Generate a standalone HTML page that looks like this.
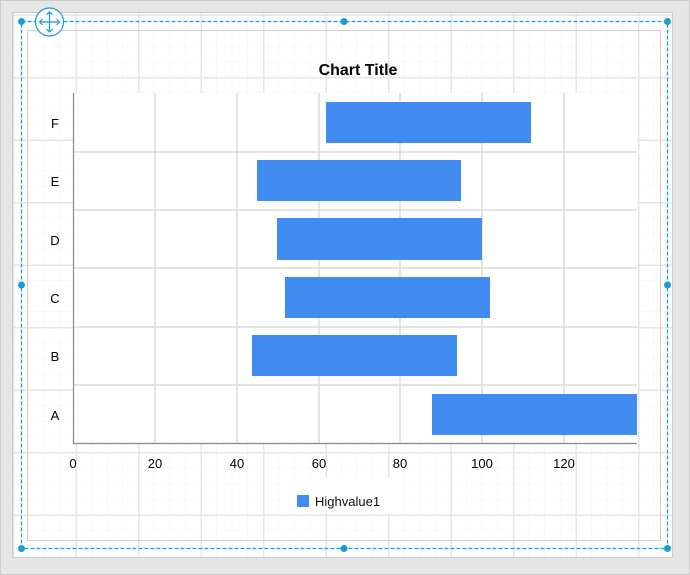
<!DOCTYPE html>
<html><head><meta charset="utf-8"><style>
html,body{margin:0;padding:0;background:#e6e6e6;}
body{width:690px;height:575px;overflow:hidden;position:relative;font-family:"Liberation Sans",sans-serif;}
</style></head><body>
<svg width="690" height="575" xmlns="http://www.w3.org/2000/svg" style="position:absolute;left:0;top:0">
<defs>
<pattern id="minor" x="13" y="14.5" width="15.625" height="15.625" patternUnits="userSpaceOnUse">
<path d="M0 0H15.625M0 0V15.625" stroke="#f1f1f1" stroke-width="1" fill="none"/>
</pattern>
<pattern id="major" x="13" y="14.5" width="62.5" height="62.5" patternUnits="userSpaceOnUse">
<path d="M0 0.5H62.5M0.5 0V62.5" stroke="#e6e6e6" stroke-width="2" fill="none"/>
</pattern>
</defs>
<rect x="0.5" y="0.5" width="689" height="574" fill="#e6e6e6" stroke="#cccccc"/>
<rect x="12.5" y="12.5" width="660" height="545" fill="#fff" stroke="#cccccc"/>
<rect x="13" y="13" width="659" height="544" fill="url(#minor)"/>
<rect x="13" y="13" width="659" height="544" fill="url(#major)"/>
<rect x="27.5" y="30.5" width="633" height="510" fill="none" stroke="#d0d0d0"/>
<rect x="73" y="93" width="564" height="350" fill="#fff"/>
<g stroke="#dcdcdc" stroke-width="1.5">
<line x1="155" y1="93" x2="155" y2="443"/><line x1="237" y1="93" x2="237" y2="443"/>
<line x1="319" y1="93" x2="319" y2="443"/><line x1="400" y1="93" x2="400" y2="443"/>
<line x1="482" y1="93" x2="482" y2="443"/><line x1="564" y1="93" x2="564" y2="443"/>
<line x1="73" y1="152" x2="637" y2="152"/><line x1="73" y1="210" x2="637" y2="210"/>
<line x1="73" y1="268" x2="637" y2="268"/><line x1="73" y1="327" x2="637" y2="327"/>
<line x1="73" y1="385" x2="637" y2="385"/>
</g>
<path d="M73.5 93V443.5H637" stroke="#888" stroke-width="1.2" fill="none"/>
<g fill="#418cf0">
<rect x="326" y="102" width="205" height="41"/>
<rect x="257" y="160" width="204" height="41"/>
<rect x="277" y="218" width="205" height="42"/>
<rect x="285" y="277" width="205" height="41"/>
<rect x="252" y="335" width="205" height="41"/>
<rect x="432" y="394" width="205" height="41"/>
</g>
<g font-size="13" fill="#000" text-anchor="middle" font-family="Liberation Sans,sans-serif">
<text x="55" y="128">F</text><text x="55" y="186">E</text><text x="55" y="245">D</text>
<text x="55" y="303">C</text><text x="55" y="361">B</text><text x="55" y="420">A</text>
<text x="73" y="468">0</text><text x="155" y="468">20</text><text x="237" y="468">40</text>
<text x="319" y="468">60</text><text x="400" y="468">80</text><text x="482" y="468">100</text><text x="564" y="468">120</text>
</g>
<text x="358" y="75" font-size="16" font-weight="bold" text-anchor="middle" fill="#000">Chart Title</text>
<rect x="285" y="478" width="117" height="35" fill="#fff"/>
<rect x="297" y="495" width="12" height="12" fill="#418cf0"/>
<text x="315" y="506" font-size="13" fill="#111">Highvalue1</text>
<rect x="21.5" y="21.5" width="646" height="527" fill="none" stroke="#0f9ee0" stroke-width="1.2" stroke-dasharray="4,2"/>
<g fill="#1a9ad6">
<circle cx="21.5" cy="21.5" r="3.5"/><circle cx="344" cy="21.5" r="3.5"/><circle cx="667.5" cy="21.5" r="3.5"/>
<circle cx="21.5" cy="285" r="3.5"/><circle cx="667.5" cy="285" r="3.5"/>
<circle cx="21.5" cy="548.5" r="3.5"/><circle cx="344" cy="548.5" r="3.5"/><circle cx="667.5" cy="548.5" r="3.5"/>
</g>
<circle cx="49.5" cy="22" r="14" fill="#fff" stroke="#1a9ad6" stroke-width="1.2"/>
<g stroke="#1a9ad6" stroke-width="1.2" fill="none">
<path d="M49.5 12V32M39.5 22H59.5"/>
<path d="M46.5 15L49.5 12L52.5 15M46.5 29L49.5 32L52.5 29M42.5 19L39.5 22L42.5 25M56.5 19L59.5 22L56.5 25"/>
</g>
</svg>
</body></html>
